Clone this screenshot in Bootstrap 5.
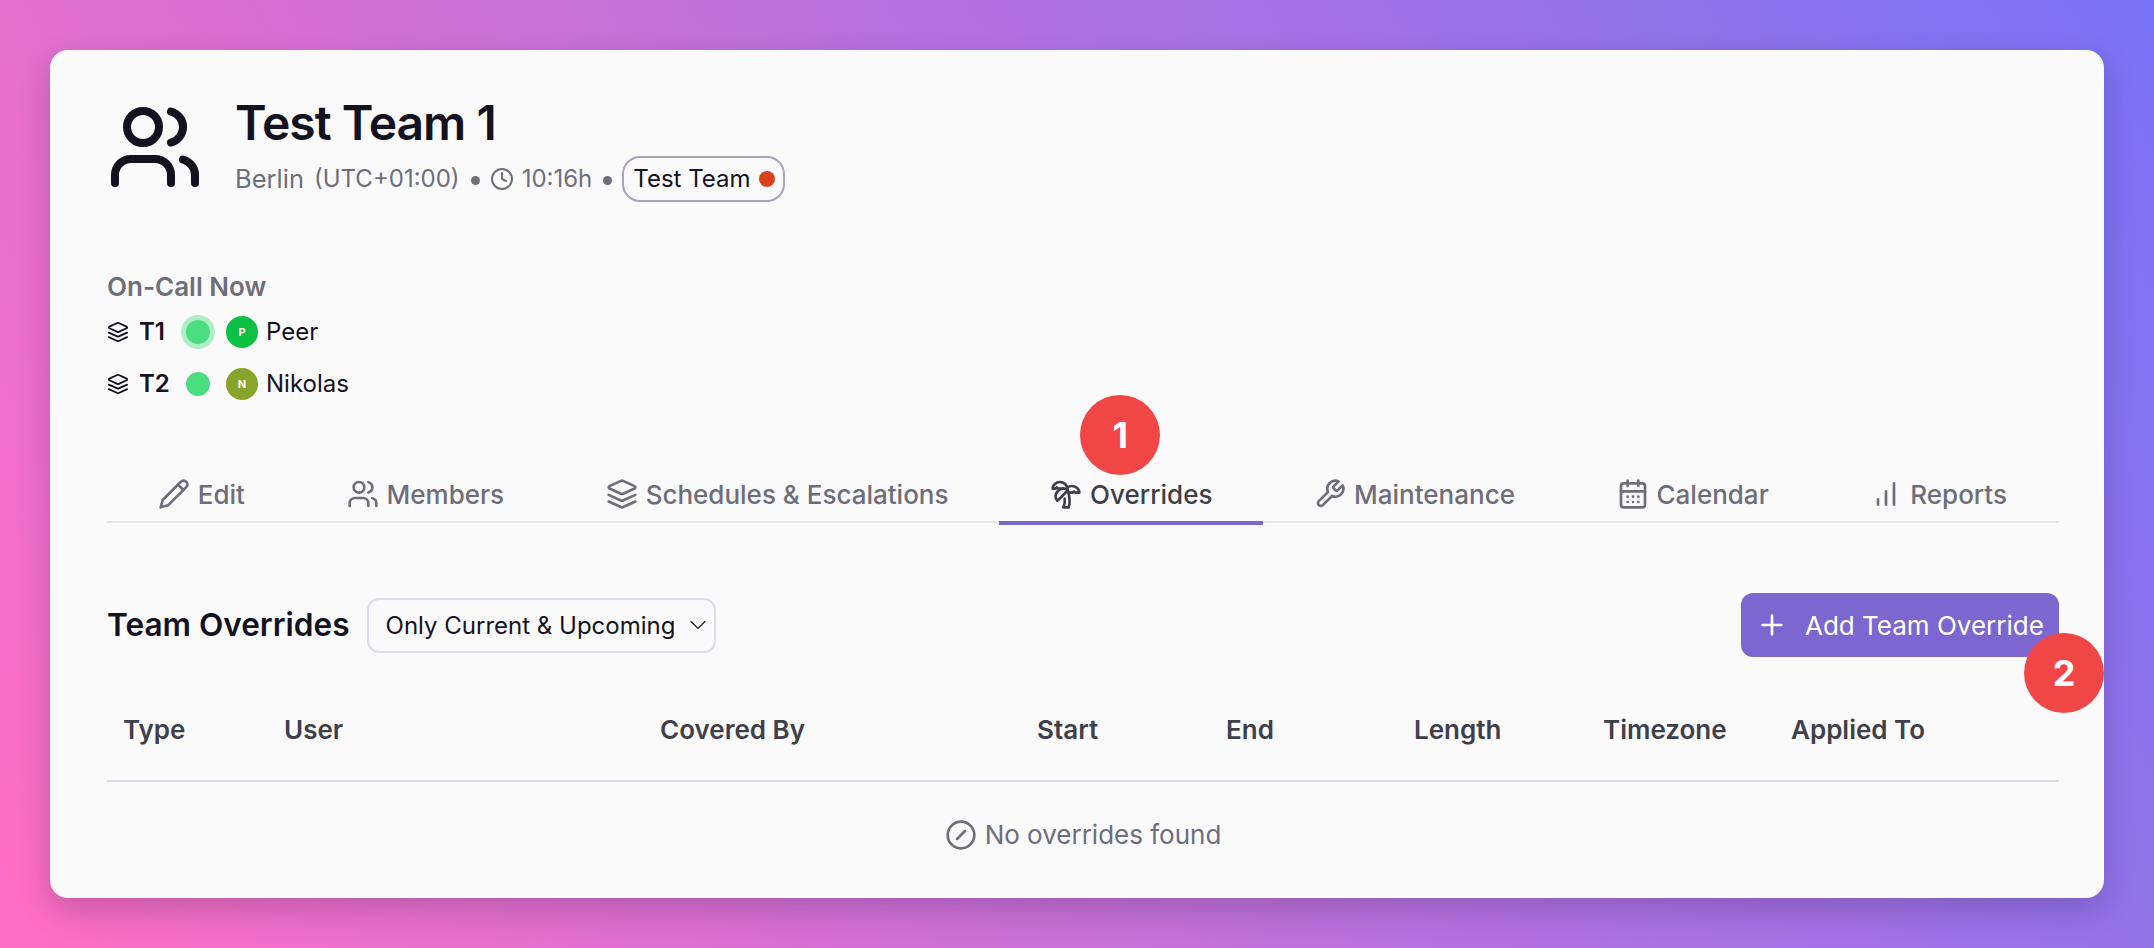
<!DOCTYPE html>
<html>
  <head>
    <meta charset="UTF-8">
    <title>Test Team 1</title>
    <link rel="stylesheet" href="https://cdn.jsdelivr.net/npm/bootstrap@5.3.0/dist/css/bootstrap.min.css">
    <style>
      html, body { height: 100%; }
      body {
        margin: 0;
        padding: 50px;
        font-family: Inter, "Liberation Sans", sans-serif;
        font-size: 24px;
        color: #14121f;
        background: linear-gradient(60deg, #ff6ec4, #7873f5);
        overflow: hidden;
      }
      svg.ico { fill: none; stroke: currentColor; stroke-width: 2; stroke-linecap: round; stroke-linejoin: round; flex: none; }
      .team-card {
        height: 848px;
        padding: 49px 45px 0 57px;
        background: #fafafa;
        border: 0;
        border-radius: 18px;
        box-shadow: 0 12px 30px rgba(30, 20, 60, .22);
      }
      .team-title { font-size: 48px; font-weight: 600; line-height: 48px; margin: 0 0 9px; letter-spacing: -1px; }
      .team-meta { color: #6e6d7a; height: 46px; font-size: 24px; }
      .team-meta .city { font-size: 25.5px; margin-right: 10px; }
      .sep-dot { width: 9px; height: 9px; border-radius: 50%; background: #6e6d7a; margin: 3px 10px 0 11px; }
      .team-chip {
        height: 46px;
        padding: 0 8px 0 9px;
        border: 2px solid #a8a4c0;
        border-radius: 18px;
        color: #14121f;
      }
      .chip-dot { width: 16px; height: 16px; border-radius: 50%; background: #d9431a; }
      .oncall { margin-top: 70px; }
      .oncall-title { font-weight: 600; color: #6e6d7a; line-height: 30px; margin-bottom: 13px; font-size: 26px; }
      .oncall-row { height: 34px; margin-bottom: 18px; font-size: 24px; }
      .oncall-row b { width: 42px; margin-left: 10px; font-weight: 600; font-size: 24px; }
      .live-dot { width: 24px; height: 24px; border-radius: 50%; background: #4ade80; margin: 0 16px 0 5px; }
      .live-dot.pulse { box-shadow: 0 0 0 5px rgba(74, 222, 128, .42); }
      .avatar-dot { width: 32px; height: 32px; border-radius: 50%; color: #fff; font-size: 11px; font-weight: 700; margin-right: 8px; }
      .team-tabs { margin-top: 48px; border-bottom: 2px solid #e5e5e5; height: 56px; }
      .team-tabs .nav-link {
        height: 58px;
        padding: 0 50.8px;
        color: #6e6d7a;
        font-size: 26px;
        font-weight: 500;
        border-bottom: 4px solid transparent;
        gap: 8px;
        white-space: nowrap;
        flex: none;
      }
      .team-tabs .nav-link.active { color: #3f3f4a; border-bottom-color: #7c66d0; }
      .tab-bubble, .btn-bubble {
        position: absolute;
        width: 80px;
        height: 80px;
        border-radius: 50%;
        background: #f14646;
        color: #fff;
        font-size: 36px;
        font-weight: 700;
      }
      .tab-bubble { top: -72px; left: 81px; }
      .btn-bubble { top: 40px; right: -45px; }
      .section-row { margin-top: 70px; height: 64px; }
      .section-title { font-size: 31.6px; font-weight: 600; margin: 0 17px 0 0; }
      .range-select {
        width: 349px;
        height: 55px;
        padding: 2px 40px 0 17px;
        font-size: 24px;
        color: #14121f;
        background-color: #fafafa;
        background-image: url("data:image/svg+xml,%3csvg xmlns='http://www.w3.org/2000/svg' viewBox='0 0 16 16'%3e%3cpath fill='none' stroke='%2314121f' stroke-width='1.2' stroke-linecap='round' d='M1 4.5l7 7 7-7'/%3e%3c/svg%3e");
        background-position: right 8px center;
        background-size: 16px;
        border: 2px solid #dcdce6;
        border-radius: 12px;
      }
      .add-btn {
        height: 64px;
        width: 318px;
        padding: 0 0 0 15px;
        gap: 17px;
        background: #7c66d0;
        border: 0;
        border-radius: 12px;
        color: #fff;
        font-size: 26px;
        white-space: nowrap;
      }
      .override-table { margin: 20px 0 0; table-layout: fixed; --bs-table-bg: transparent; }
      .override-table th {
        height: 104px;
        padding: 2px 16px 0;
        vertical-align: middle;
        font-size: 26px;
        font-weight: 600;
        color: #3f3f4a;
        border-bottom: 2px solid #dcdce6;
      }
      .override-table td { height: 106px; border: 0; padding: 0; vertical-align: middle; color: #6e6d7a; font-size: 26px; }
    </style>
  </head>
  <body>
    <div class="card team-card">
      <div class="d-flex">
        <svg class="ico" width="96" height="96" viewBox="0 0 24 24"><path d="M16 21v-2a4 4 0 0 0-4-4H6a4 4 0 0 0-4 4v2"/><circle cx="9" cy="7" r="4"/><path d="M22 21v-2a4 4 0 0 0-3-3.87"/><path d="M16 3.13a4 4 0 0 1 0 7.75"/></svg>
        <div class="ms-4 ps-2">
          <h1 class="team-title">Test Team 1</h1>
          <div class="team-meta d-flex align-items-center">
            <span class="city">Berlin</span><span>(UTC+01:00)</span>
            <span class="sep-dot"></span>
            <svg class="ico me-2" width="24" height="24" viewBox="0 0 24 24" stroke-width="1.6"><circle cx="12" cy="12" r="10"/><polyline points="12 6 12 12 16 14"/></svg>
            <span>10:16h</span>
            <span class="sep-dot"></span>
            <span class="team-chip d-flex align-items-center gap-2">Test Team <span class="chip-dot"></span></span>
          </div>
        </div>
      </div>

      <div class="oncall">
        <div class="oncall-title">On-Call Now</div>
        <div class="oncall-row d-flex align-items-center">
          <svg class="ico" width="22" height="22" viewBox="0 0 24 24"><path d="m12.83 2.18a2 2 0 0 0-1.66 0L2.6 6.08a1 1 0 0 0 0 1.83l8.58 3.91a2 2 0 0 0 1.66 0l8.58-3.9a1 1 0 0 0 0-1.83Z"/><path d="m22 17.65-9.17 4.16a2 2 0 0 1-1.66 0L2 17.65"/><path d="m22 12.65-9.17 4.16a2 2 0 0 1-1.66 0L2 12.65"/></svg>
          <b>T1</b>
          <span class="live-dot pulse"></span>
          <span class="avatar-dot d-flex align-items-center justify-content-center" style="background:#0cc044">P</span>
          Peer
        </div>
        <div class="oncall-row d-flex align-items-center">
          <svg class="ico" width="22" height="22" viewBox="0 0 24 24"><path d="m12.83 2.18a2 2 0 0 0-1.66 0L2.6 6.08a1 1 0 0 0 0 1.83l8.58 3.91a2 2 0 0 0 1.66 0l8.58-3.9a1 1 0 0 0 0-1.83Z"/><path d="m22 17.65-9.17 4.16a2 2 0 0 1-1.66 0L2 17.65"/><path d="m22 12.65-9.17 4.16a2 2 0 0 1-1.66 0L2 12.65"/></svg>
          <b>T2</b>
          <span class="live-dot"></span>
          <span class="avatar-dot d-flex align-items-center justify-content-center" style="background:#8aa32a">N</span>
          Nikolas
        </div>
      </div>

      <nav class="nav team-tabs flex-nowrap">
        <a class="nav-link d-flex align-items-center" href="#"><svg class="ico" width="32" height="32" viewBox="0 0 24 24" stroke-width="1.6"><path d="M17 3a2.85 2.83 0 1 1 4 4L7.5 20.5 2 22l1.5-5.5Z"/><path d="m15 5 4 4"/></svg>Edit</a>
        <a class="nav-link d-flex align-items-center" href="#"><svg class="ico" width="32" height="32" viewBox="0 0 24 24" stroke-width="1.6"><path d="M16 21v-2a4 4 0 0 0-4-4H6a4 4 0 0 0-4 4v2"/><circle cx="9" cy="7" r="4"/><path d="M22 21v-2a4 4 0 0 0-3-3.87"/><path d="M16 3.13a4 4 0 0 1 0 7.75"/></svg>Members</a>
        <a class="nav-link d-flex align-items-center" href="#"><svg class="ico" width="32" height="32" viewBox="0 0 24 24" stroke-width="1.6"><path d="m12.83 2.18a2 2 0 0 0-1.66 0L2.6 6.08a1 1 0 0 0 0 1.83l8.58 3.91a2 2 0 0 0 1.66 0l8.58-3.9a1 1 0 0 0 0-1.83Z"/><path d="m22 17.65-9.17 4.16a2 2 0 0 1-1.66 0L2 17.65"/><path d="m22 12.65-9.17 4.16a2 2 0 0 1-1.66 0L2 12.65"/></svg>Schedules &amp; Escalations</a>
        <a class="nav-link active d-flex align-items-center position-relative" href="#"><svg class="ico" width="32" height="32" viewBox="0 0 24 24" stroke-width="1.6"><path d="M13 8c0-2.76-2.46-5-5.5-5S2 5.24 2 8h2l1-1 1 1h4"/><path d="M13 7.14A5.82 5.82 0 0 1 16.5 6c3.04 0 5.5 2.24 5.5 5h-3l-1-1-1 1h-3"/><path d="M5.89 9.71c-2.15 2.15-2.3 5.47-.35 7.43l4.24-4.25.7-.7.71-.71 2.12-2.12c-1.95-1.96-5.27-1.8-7.42.35"/><path d="M11 15.5c.5 2.5-.17 4.5-1 6.5h4c2-5.5-.5-12-1-14"/></svg>Overrides<span class="tab-bubble d-flex align-items-center justify-content-center">1</span></a>
        <a class="nav-link d-flex align-items-center" href="#"><svg class="ico" width="32" height="32" viewBox="0 0 24 24" stroke-width="1.6"><path d="M14.7 6.3a1 1 0 0 0 0 1.4l1.6 1.6a1 1 0 0 0 1.4 0l3.77-3.77a6 6 0 0 1-7.94 7.94l-6.91 6.91a2.12 2.12 0 0 1-3-3l6.91-6.91a6 6 0 0 1 7.94-7.94l-3.76 3.76z"/></svg>Maintenance</a>
        <a class="nav-link d-flex align-items-center" href="#"><svg class="ico" width="32" height="32" viewBox="0 0 24 24" stroke-width="1.6"><rect width="18" height="18" x="3" y="4" rx="2"/><path d="M16 2v4M8 2v4M3 10h18M8 14h.01M12 14h.01M16 14h.01M8 18h.01M12 18h.01M16 18h.01"/></svg>Calendar</a>
        <a class="nav-link d-flex align-items-center" href="#"><svg class="ico" width="32" height="32" viewBox="0 0 24 24" stroke-width="1.6"><path d="M12 20V10M18 20V4M6 20v-4"/></svg>Reports</a>
      </nav>

      <div class="section-row d-flex align-items-center justify-content-between">
        <div class="d-flex align-items-center">
          <h2 class="section-title">Team Overrides</h2>
          <select class="form-select range-select"><option>Only Current &amp; Upcoming</option></select>
        </div>
        <div class="position-relative">
          <button type="button" class="btn add-btn d-flex align-items-center"><svg class="ico" width="32" height="32" viewBox="0 0 24 24" stroke-width="1.6"><path d="M5 12h14M12 5v14"/></svg>Add Team Override</button>
          <span class="btn-bubble d-flex align-items-center justify-content-center">2</span>
        </div>
      </div>

      <table class="table override-table">
        <colgroup>
          <col width="161"><col width="376"><col width="377"><col width="189"><col width="188"><col width="189"><col width="188"><col>
        </colgroup>
        <thead>
          <tr><th>Type</th><th>User</th><th>Covered By</th><th>Start</th><th>End</th><th>Length</th><th>Timezone</th><th>Applied To</th></tr>
        </thead>
        <tbody>
          <tr>
            <td colspan="8">
              <div class="d-flex align-items-center justify-content-center gap-2">
                <svg class="ico" width="32" height="32" viewBox="0 0 24 24" stroke-width="1.6"><circle cx="12" cy="12" r="10"/><path d="m9 15 6-6"/></svg>
                No overrides found
              </div>
            </td>
          </tr>
        </tbody>
      </table>
    </div>

    <script src="https://cdn.jsdelivr.net/npm/bootstrap@5.3.0/dist/js/bootstrap.bundle.min.js"></script>
  </body>
</html>
